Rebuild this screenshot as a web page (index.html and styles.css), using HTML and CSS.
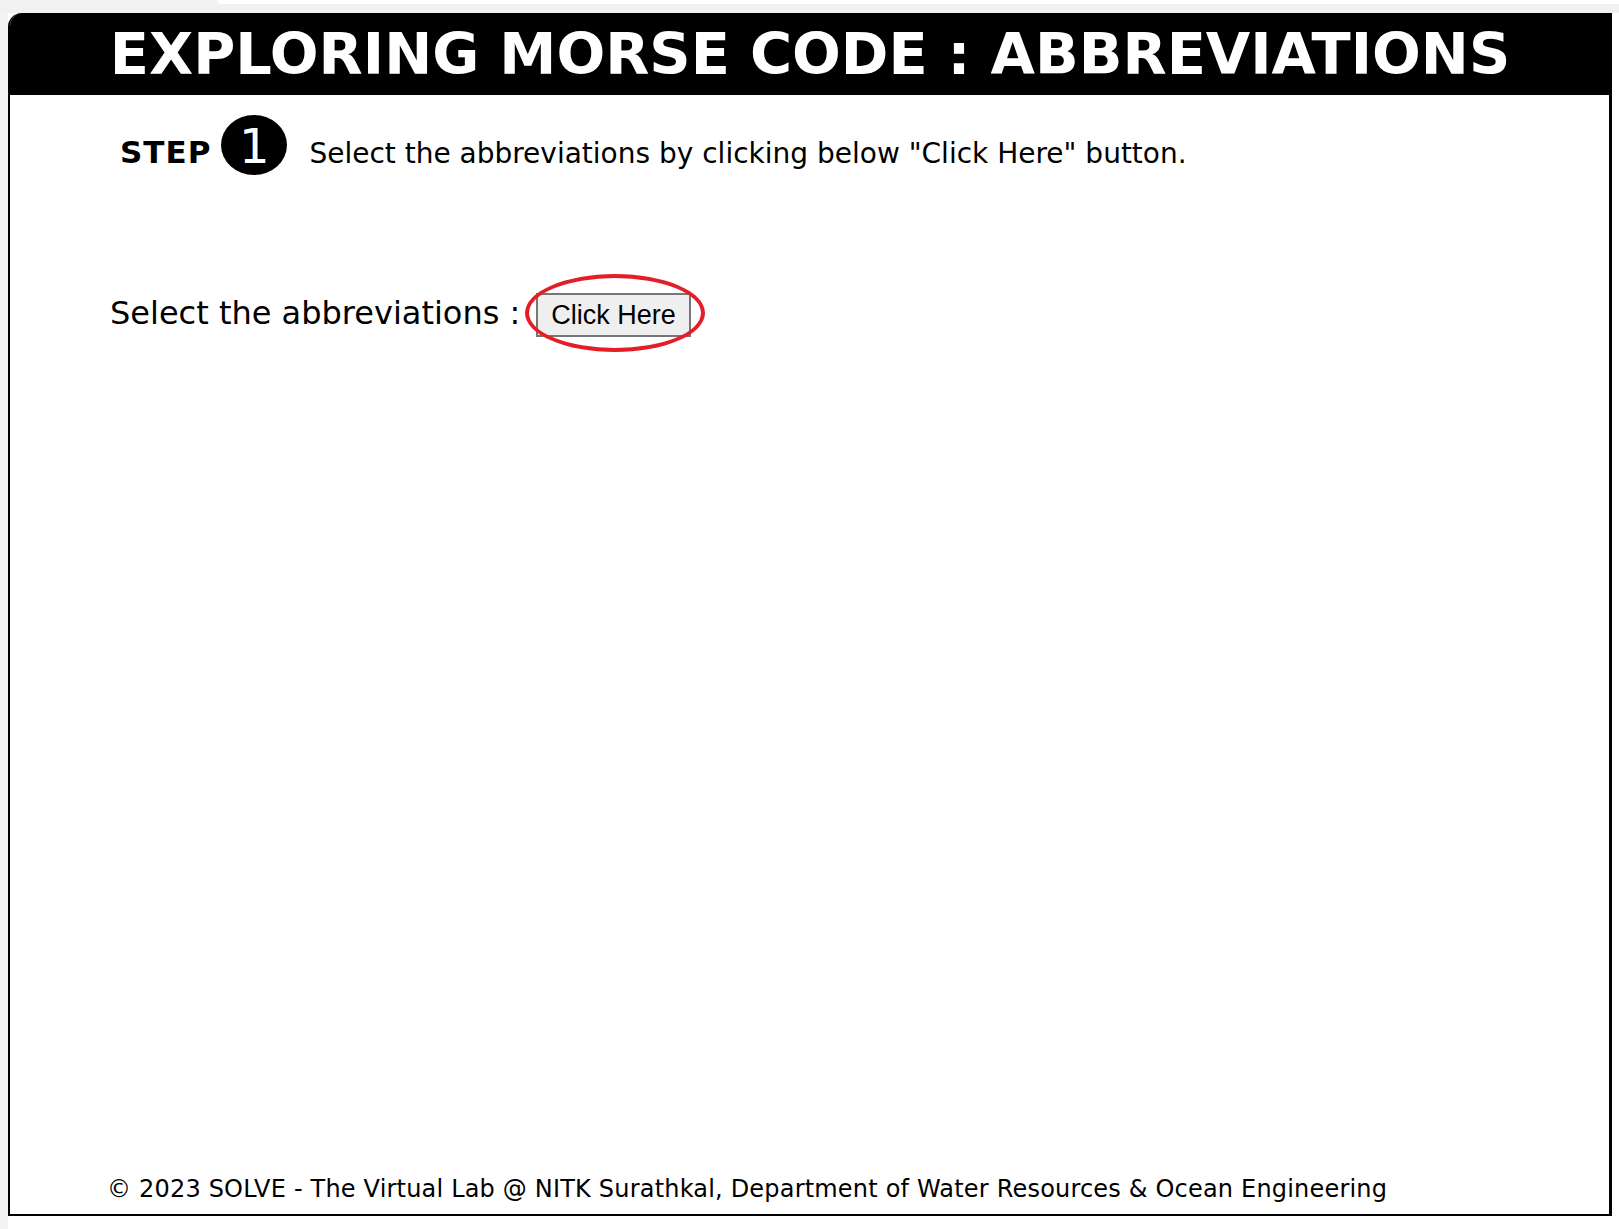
FILE: index.html
```html
<!DOCTYPE html>
<html lang="en">
<head>
<meta charset="utf-8">
<title>Exploring Morse Code : Abbreviations</title>
<link rel="stylesheet" href="styles.css">
</head>
<body>
<div class="viewport">
  <div class="topstrip">
    <div class="topstrip-spacer"></div>
    <div class="topstrip-tab"></div>
  </div>
  <div class="main">
    <div class="gutter"></div>
    <div class="panel">
      <header class="title">EXPLORING MORSE CODE : ABBREVIATIONS</header>
      <div class="content">
        <div class="step-row">
          <span class="step-label">STEP</span>
          <span class="step-num">1</span>
          <span class="step-text">Select the abbreviations by clicking below "Click Here" button.</span>
        </div>
        <div class="select-row">
          <span class="select-label">Select the abbreviations :</span>
          <span class="btn-wrap">
            <button class="btn" type="button">Click Here</button>
            <span class="ring"></span>
          </span>
        </div>
        <footer class="footer">© 2023 SOLVE - The Virtual Lab @ NITK Surathkal, Department of Water Resources &amp; Ocean Engineering</footer>
      </div>
    </div>
  </div>
</div>
</body>
</html>
```
FILE: styles.css
```css
html, body {
  margin: 0;
  padding: 0;
  background: #ffffff;
}
body {
  font-family: "DejaVu Sans", Verdana, sans-serif;
  color: #000;
}
.viewport {
  display: flex;
  flex-direction: column;
  min-height: 100vh;
}
.topstrip {
  display: flex;
  height: 13px;
  background: #f1f1f1;
}
.topstrip-spacer {
  width: 217px;
}
.topstrip-tab {
  flex: 1;
  height: 4px;
  background: #ffffff;
  border-bottom-left-radius: 10px;
}
.main {
  display: flex;
  flex: 1;
}
.gutter {
  width: 8px;
  background: #f4f4f4;
}
.panel {
  box-sizing: border-box;
  width: 1604px;
  height: 1203px;
  border: 2px solid #000;
  border-top: none;
  border-right-width: 3px;
  border-top-left-radius: 14px;
  overflow: hidden;
  display: flex;
  flex-direction: column;
  background: #fff;
}
.title {
  background: #000;
  color: #fff;
  height: 82px;
  line-height: 83px;
  font-size: 57.4px;
  font-weight: bold;
  text-align: center;
  white-space: nowrap;
  margin: 0 -3px 0 -2px;
}
.content {
  flex: 1;
  display: flex;
  flex-direction: column;
  padding: 20px 0 11px 100px;
}
.step-row {
  display: flex;
  align-items: baseline;
  padding-left: 10px;
}
.step-label {
  font-size: 31px;
  font-weight: bold;
  letter-spacing: 1px;
}
.step-num {
  display: inline-block;
  width: 66px;
  height: 60px;
  line-height: 60px;
  padding-top: 1px;
  box-sizing: border-box;
  border-radius: 50%;
  background: #000;
  color: #fff;
  font-size: 48px;
  text-align: center;
  margin-left: 10px;
}
.step-text {
  font-size: 28px;
  margin-left: 22px;
}
.select-row {
  display: flex;
  align-items: baseline;
  margin-top: 118px;
}
.select-label {
  font-size: 32px;
}
.btn-wrap {
  position: relative;
  display: inline-block;
  margin-left: 16px;
}
.btn {
  font-family: "Liberation Sans", Arial, sans-serif;
  font-size: 27px;
  color: #000;
  background: #efefef;
  border: 2px solid #767676;
  border-radius: 0;
  padding: 5px 13px 4px;
  margin: 0;
}
.ring {
  position: absolute;
  left: -11px;
  top: -19px;
  width: 180px;
  height: 78px;
  box-sizing: border-box;
  border: 4px solid #e41e26;
  border-radius: 50%;
  pointer-events: none;
}
.footer {
  margin-top: auto;
  font-size: 24px;
  letter-spacing: 0.19px;
  margin-left: -3px;
}
```
